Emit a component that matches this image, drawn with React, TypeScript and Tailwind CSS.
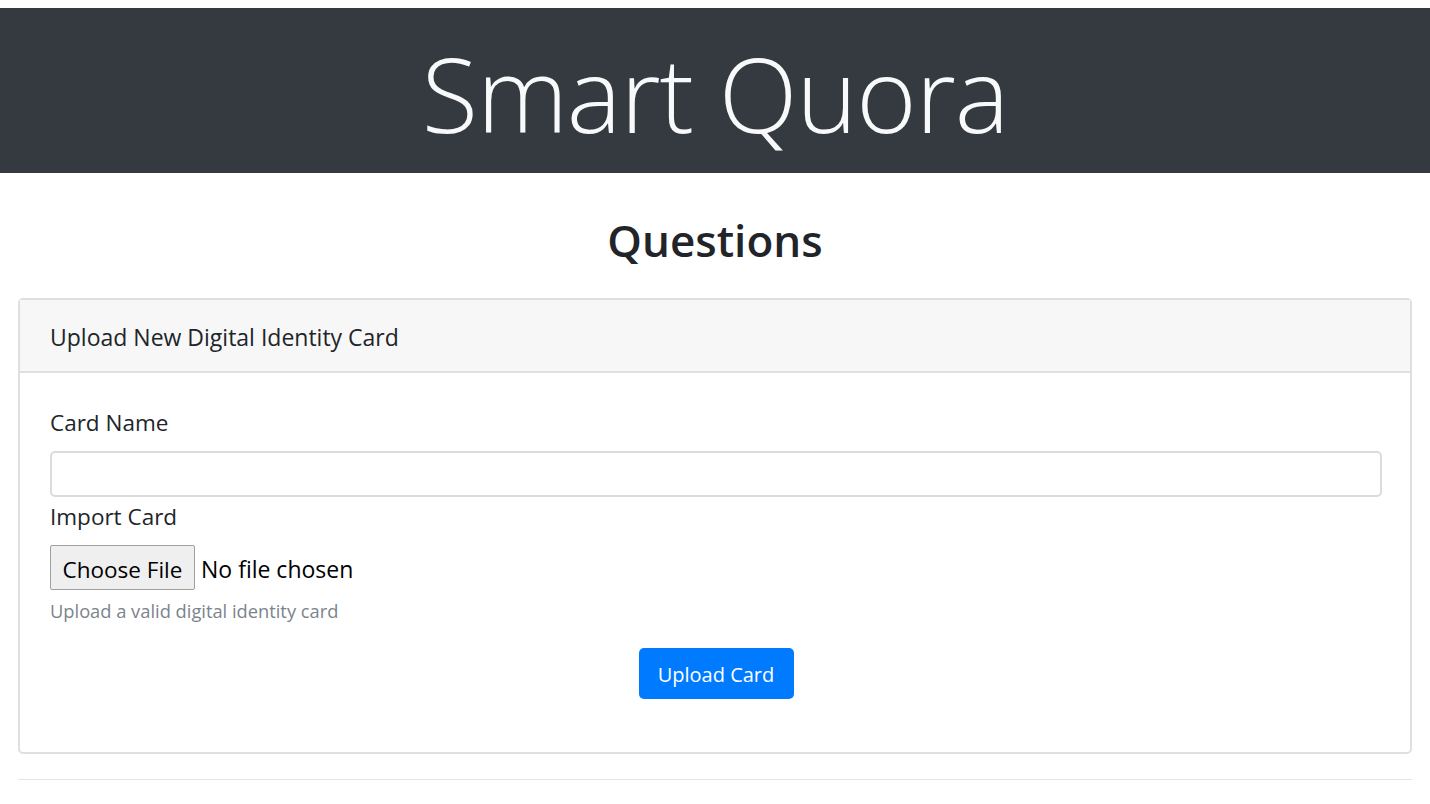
export default function App() {
  return (
    <div className="min-h-screen bg-white pt-[8px] text-[#212529]" style={{ fontFamily: '"Open Sans", "Noto Sans", sans-serif' }}>
      <header className="flex h-[165px] items-center justify-center bg-[#343a40]">
        <h1 className="mt-[6px] text-[103px] font-light leading-none tracking-[-1px] text-[#f8f9fa]">Smart Quora</h1>
      </header>

      <main className="px-[18px]">
        <h2 className="mt-[43px] text-center text-[44px] font-semibold leading-[48px]">Questions</h2>

        <div className="mt-[34px] rounded-[5px] border-2 border-[#dfdfdf]">
          <div className="flex h-[73px] items-center border-b-2 border-[#dfdfdf] bg-[#f7f7f7] px-[30px] pt-[4px] text-[23px]">
            Upload New Digital Identity Card
          </div>

          <form className="flex flex-col pb-[53px] pl-[30px] pr-[28px] pt-[35px]" onSubmit={(e) => e.preventDefault()}>
            <label className="text-[22.5px] leading-[30px]">Card Name</label>
            <input
              type="text"
              className="mt-[13px] h-[46px] rounded-[5px] border-2 border-[#dcdcdc] px-3 text-[22px] outline-none"
            />

            <label className="mt-[5px] text-[22.5px] leading-[30px]">Import Card</label>
            <div className="mt-[13px] flex items-center gap-[6px] text-[23px]">
              <button
                type="button"
                className="h-[45px] w-[145px] rounded-[2px] border border-[#a0a0a0] bg-[#efefef] pt-[4px] text-[22.5px] text-black"
              >
                Choose File
              </button>
              <span className="pt-[4px] text-black">No file chosen</span>
            </div>
            <small className="mt-[9px] text-[18.3px] leading-[24px] text-[#7b848b]">Upload a valid digital identity card</small>

            <div className="mt-[25px] flex justify-center">
              <button
                type="submit"
                className="h-[51px] w-[155px] rounded-[5px] bg-[#007bff] pt-[3px] text-[20px] text-white"
              >
                Upload Card
              </button>
            </div>
          </form>
        </div>

        <hr className="mt-[25px] border-t border-[#e5e5e5]" />
      </main>
    </div>
  );
}
